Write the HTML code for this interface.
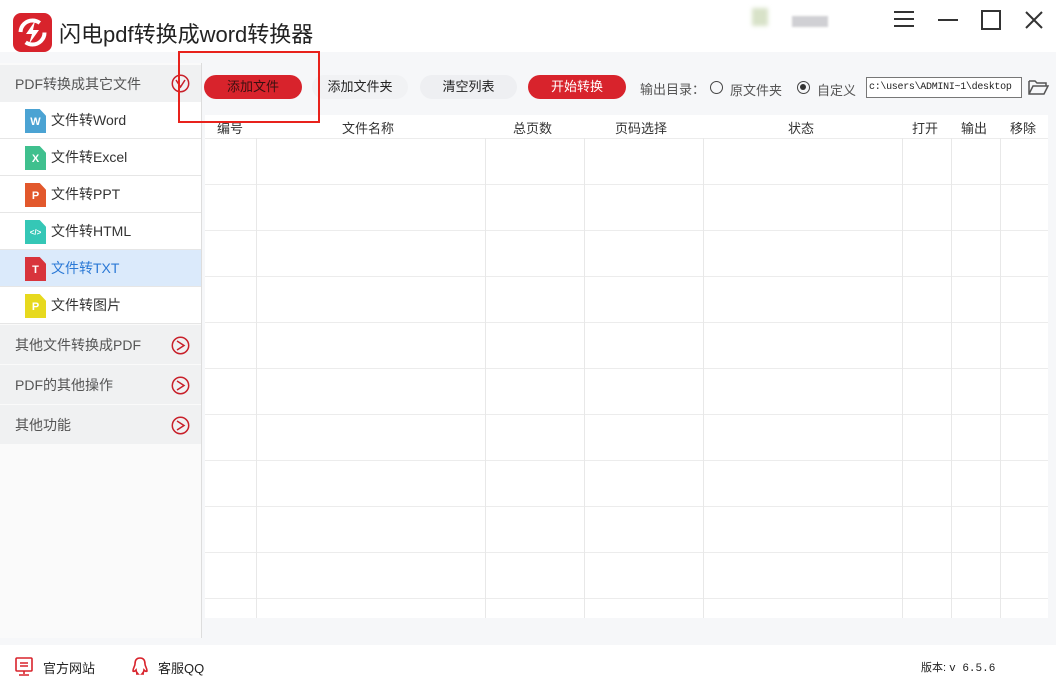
<!DOCTYPE html><html><head><meta charset="utf-8"><style>
*{margin:0;padding:0;box-sizing:border-box}
body{width:1056px;height:687px;background:#fff;font-family:"Liberation Sans","Noto Sans CJK SC",sans-serif;position:relative;overflow:hidden;color:#333}
.a{position:absolute}
.side{left:0;top:63px;width:202px;height:575px;background:#fafafa;border-right:1px solid #ddd}
.grp{position:absolute;left:0;width:201px;height:38px;background:#f0f1f2;color:#555;font-size:14px;line-height:38px;padding-left:15px}
.item{position:absolute;left:0;width:201px;height:37px;background:#fff;border-bottom:1px solid #e6e6e6;font-size:14px;line-height:37px;padding-left:51px;color:#333}
.ic{position:absolute;left:25px;top:7px;width:21px;height:24px;color:#fff;font-size:11px;font-weight:bold;text-align:center;line-height:26px;clip-path:polygon(0 0,70% 0,100% 28%,100% 100%,0 100%)}
.arr{position:absolute;left:171px;top:11px;width:19px;height:19px}
.btn{position:absolute;top:75px;height:24px;border-radius:12px;font-size:13px;line-height:24px;text-align:center}
.vl{position:absolute;top:138px;width:1px;height:480px;background:#e8e8e8}
.hl{position:absolute;left:205px;width:843px;height:1px;background:#ececec}
.th{position:absolute;top:118px;font-size:13px;color:#333}
</style></head><body>
<div class="a" style="left:13px;top:13px;width:39px;height:39px;border-radius:8px;background:#d8232c"></div>
<svg class="a" style="left:13px;top:13px" width="39" height="39"><circle cx="19.5" cy="19.5" r="12" fill="none" stroke="#fff" stroke-width="4" stroke-dasharray="26 12"/><path d="M22 8 L13 21 L19 21 L16 31 L26 17 L20 17 Z" fill="#fff"/></svg>
<div class="a" style="left:59px;top:17px;font-size:22px;color:#222">闪电pdf转换成word转换器</div>
<div class="a" style="left:752px;top:8px;width:16px;height:18px;background:#d8e2c8;filter:blur(2px)"></div>
<div class="a" style="left:792px;top:16px;width:36px;height:11px;background:#d0d0d4;filter:blur(1px)"></div>
<svg class="a" style="left:890px;top:8px" width="160" height="26" stroke="#333" stroke-width="2" fill="none"><path d="M4 4h20M4 11h20M4 18h20"/><path d="M48 12h20"/><rect x="92" y="3" width="18" height="18"/><path d="M136 4l16 16M152 4l-16 16"/></svg>
<div class="a" style="left:0;top:52px;width:1056px;height:593px;background:#f6f7f9"></div>
<div class="a side"></div>
<div class="grp" style="top:65px">PDF转换成其它文件<svg class="arr" style="top:9px" viewBox="0 0 19 19" fill="none" stroke="#c8202a" stroke-width="1.5"><circle cx="9.5" cy="9.5" r="8.2"/><path d="M5 6l4.5 7 4.5-7"/></svg></div>
<div class="item" style="top:102px"><div class="ic" style="background:#4ba3d3">W</div>文件转Word</div>
<div class="item" style="top:139px"><div class="ic" style="background:#3fc08e">X</div>文件转Excel</div>
<div class="item" style="top:176px"><div class="ic" style="background:#e2582c">P</div>文件转PPT</div>
<div class="item" style="top:213px"><div class="ic" style="background:#35c7b6;font-size:8px">&lt;/&gt;</div>文件转HTML</div>
<div class="item" style="top:250px;background:#dbeafb;color:#2b79d6"><div class="ic" style="background:#d8343c">T</div>文件转TXT</div>
<div class="item" style="top:287px"><div class="ic" style="background:#e7d91e">P</div>文件转图片</div>
<div class="grp" style="top:325px;height:39px;line-height:41px">其他文件转换成PDF<svg class="arr" viewBox="0 0 19 19" fill="none" stroke="#c8202a" stroke-width="1.5"><circle cx="9.5" cy="9.5" r="8.2"/><path d="M6 5l7 4.5-7 4.5"/></svg></div>
<div class="grp" style="top:365px;height:39px;line-height:41px">PDF的其他操作<svg class="arr" viewBox="0 0 19 19" fill="none" stroke="#c8202a" stroke-width="1.5"><circle cx="9.5" cy="9.5" r="8.2"/><path d="M6 5l7 4.5-7 4.5"/></svg></div>
<div class="grp" style="top:405px;height:39px;line-height:41px">其他功能<svg class="arr" viewBox="0 0 19 19" fill="none" stroke="#c8202a" stroke-width="1.5"><circle cx="9.5" cy="9.5" r="8.2"/><path d="M6 5l7 4.5-7 4.5"/></svg></div>
<div class="btn" style="left:204px;width:98px;background:#d8232c;color:#3a1010">添加文件</div>
<div class="btn" style="left:312px;width:96px;background:#f1f2f4;color:#222">添加文件夹</div>
<div class="btn" style="left:420px;width:97px;background:#eeeff2;color:#222">清空列表</div>
<div class="btn" style="left:528px;width:98px;background:#d8232c;color:#fff">开始转换</div>
<div class="a" style="left:640px;top:79px;font-size:13px;color:#555">输出目录：</div>
<div class="a" style="left:710px;top:81px;width:13px;height:13px;border:1.5px solid #444;border-radius:50%"></div>
<div class="a" style="left:730px;top:80px;font-size:13px;color:#555">原文件夹</div>
<div class="a" style="left:797px;top:81px;width:13px;height:13px;border:1.5px solid #444;border-radius:50%"><div style="margin:2px;width:6px;height:6px;border-radius:50%;background:#333"></div></div>
<div class="a" style="left:817px;top:80px;font-size:13px;color:#555">自定义</div>
<div class="a" style="left:866px;top:77px;width:156px;height:21px;border:1px solid #777;background:#fff;font-family:'Liberation Mono',monospace;font-size:10px;letter-spacing:-0.3px;line-height:19px;padding-left:2px;color:#222;overflow:hidden;white-space:nowrap">c:\users\ADMINI~1\desktop</div>
<svg class="a" style="left:1028px;top:78px" width="22" height="18" fill="none" stroke="#555" stroke-width="1.5"><path d="M1 3h6l2 2h9v3M1 3v13h15l4-8H5L1 16"/></svg>
<div class="a" style="left:205px;top:115px;width:843px;height:503px;background:#fff"></div>
<div class="hl" style="top:138px"></div>
<div class="hl" style="top:184px"></div><div class="hl" style="top:230px"></div><div class="hl" style="top:276px"></div><div class="hl" style="top:322px"></div><div class="hl" style="top:368px"></div><div class="hl" style="top:414px"></div><div class="hl" style="top:460px"></div><div class="hl" style="top:506px"></div><div class="hl" style="top:552px"></div><div class="hl" style="top:598px"></div>
<div class="vl" style="left:256px"></div><div class="vl" style="left:485px"></div><div class="vl" style="left:584px"></div><div class="vl" style="left:703px"></div><div class="vl" style="left:902px"></div><div class="vl" style="left:951px"></div><div class="vl" style="left:1000px"></div>
<div class="th" style="left:217px">编号</div><div class="th" style="left:342px">文件名称</div><div class="th" style="left:513px">总页数</div><div class="th" style="left:615px">页码选择</div><div class="th" style="left:788px">状态</div><div class="th" style="left:912px">打开</div><div class="th" style="left:961px">输出</div><div class="th" style="left:1010px">移除</div>
<div class="a" style="left:178px;top:51px;width:142px;height:72px;border:2px solid #e8221c"></div>
<svg class="a" style="left:14px;top:657px" width="20" height="20" fill="none" stroke="#d8232c" stroke-width="1.6"><rect x="2" y="1" width="16" height="13" rx="1"/><path d="M6 6h8M6 9h8M10 14v3M5 18h10"/></svg>
<div class="a" style="left:43px;top:658px;font-size:13px;color:#222">官方网站</div>
<svg class="a" style="left:130px;top:656px" width="20" height="22" fill="none" stroke="#d8232c" stroke-width="1.6"><path d="M10 2c-4 0-5 3-5 6 0 2-2 4-2 7 1 1 2 0 3-1 0 2 1 3 2 4H6M10 2c4 0 5 3 5 6 0 2 2 4 2 7-1 1-2 0-3-1 0 2-1 3-2 4h2"/></svg>
<div class="a" style="left:158px;top:658px;font-size:13px;color:#222">客服QQ</div>
<div class="a" style="left:921px;top:659px;font-size:11px;color:#222">版本: <span style="font-family:'Liberation Mono',monospace">v 6.5.6</span></div>
</body></html>
